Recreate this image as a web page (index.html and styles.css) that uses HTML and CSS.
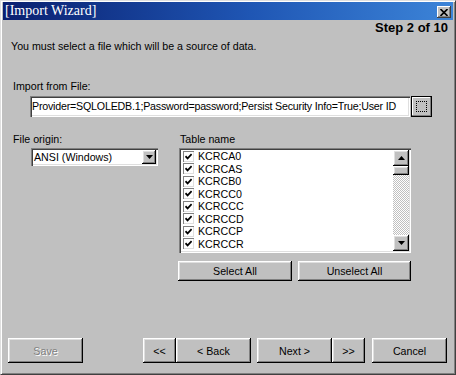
FILE: index.html
```html
<html>
    <head>
        <link rel="stylesheet" href="styles.css">
    </head>
    <body>

    <div class="window">
        <div class="titlebar">
            <span class="title">[Import Wizard]</span>
            <span class="close">
                <svg width="8" height="7" viewBox="0 0 8 7"><path d="M0.5 0 L7.5 7 M7.5 0 L0.5 7" stroke="#000" stroke-width="1.6"/></svg>
            </span>
        </div>

        <div class="step">Step 2 of 10</div>
        <div class="intro">You must select a file which will be a source of data.</div>

        <div class="label import-label">Import from File:</div>
        <div class="file-row">
            <div class="field file-input">Provider=SQLOLEDB.1;Password=password;Persist Security Info=True;User ID</div>
            <div class="browse"><span class="focus-box"></span></div>
        </div>

        <div class="columns">
            <div class="col-origin">
                <div class="label">File origin:</div>
                <div class="field combo">
                    <span class="combo-text">ANSI (Windows)</span>
                    <span class="raised arrow-btn">
                        <svg width="7" height="4" viewBox="0 0 7 4"><path d="M0 0 H7 L3.5 4 Z" fill="#000"/></svg>
                    </span>
                </div>
            </div>
            <div class="col-tables">
                <div class="label table-label">Table name</div>
                <div class="field listbox">
                    <div class="items">
                        <div class="item"><span class="check"><svg width="7" height="7" viewBox="0 0 7 7"><path d="M0.5 3.2 L2.6 5.4 L6.6 1.2" stroke="#000" stroke-width="1.7" fill="none"/></svg></span>KCRCA0</div>
                        <div class="item"><span class="check"><svg width="7" height="7" viewBox="0 0 7 7"><path d="M0.5 3.2 L2.6 5.4 L6.6 1.2" stroke="#000" stroke-width="1.7" fill="none"/></svg></span>KCRCAS</div>
                        <div class="item"><span class="check"><svg width="7" height="7" viewBox="0 0 7 7"><path d="M0.5 3.2 L2.6 5.4 L6.6 1.2" stroke="#000" stroke-width="1.7" fill="none"/></svg></span>KCRCB0</div>
                        <div class="item"><span class="check"><svg width="7" height="7" viewBox="0 0 7 7"><path d="M0.5 3.2 L2.6 5.4 L6.6 1.2" stroke="#000" stroke-width="1.7" fill="none"/></svg></span>KCRCC0</div>
                        <div class="item"><span class="check"><svg width="7" height="7" viewBox="0 0 7 7"><path d="M0.5 3.2 L2.6 5.4 L6.6 1.2" stroke="#000" stroke-width="1.7" fill="none"/></svg></span>KCRCCC</div>
                        <div class="item"><span class="check"><svg width="7" height="7" viewBox="0 0 7 7"><path d="M0.5 3.2 L2.6 5.4 L6.6 1.2" stroke="#000" stroke-width="1.7" fill="none"/></svg></span>KCRCCD</div>
                        <div class="item"><span class="check"><svg width="7" height="7" viewBox="0 0 7 7"><path d="M0.5 3.2 L2.6 5.4 L6.6 1.2" stroke="#000" stroke-width="1.7" fill="none"/></svg></span>KCRCCP</div>
                        <div class="item"><span class="check"><svg width="7" height="7" viewBox="0 0 7 7"><path d="M0.5 3.2 L2.6 5.4 L6.6 1.2" stroke="#000" stroke-width="1.7" fill="none"/></svg></span>KCRCCR</div>
                    </div>
                    <div class="scrollbar">
                        <span class="raised scroll-btn"><svg width="7" height="4" viewBox="0 0 7 4"><path d="M0 4 H7 L3.5 0 Z" fill="#000"/></svg></span>
                        <span class="raised thumb"></span>
                        <span class="track"></span>
                        <span class="raised scroll-btn"><svg width="7" height="4" viewBox="0 0 7 4"><path d="M0 0 H7 L3.5 4 Z" fill="#000"/></svg></span>
                    </div>
                </div>
                <div class="list-buttons">
                    <div class="raised btn select-all">Select All</div>
                    <div class="raised btn unselect-all">Unselect All</div>
                </div>
            </div>
        </div>

        <div class="nav">
            <div class="raised btn wide disabled">Save</div>
            <div class="raised btn narrow first">&lt;&lt;</div>
            <div class="raised btn wide">&lt; Back</div>
            <div class="raised btn wide next">Next &gt;</div>
            <div class="raised btn narrow">&gt;&gt;</div>
            <div class="raised btn wide cancel">Cancel</div>
        </div>
    </div>

    </body>
</html>
```

FILE: styles.css
```css
* {
    box-sizing: border-box;
}

body {
    margin: 0;
    background-color: #c0c0c0;
    font-family: "Liberation Sans", Arial, sans-serif;
    font-size: 8pt;
    color: #000;
    overflow: hidden;
}

.window {
    width: 456px;
    height: 375px;
    display: flex;
    flex-direction: column;
    padding: 1px 2px;
    border: 1px solid;
    border-color: #dfdfdf #404040 #404040 #dfdfdf;
    box-shadow: inset 1px 1px #fff, inset -1px -1px #808080;
    background-color: #c0c0c0;
}

.titlebar {
    height: 18px;
    display: flex;
    align-items: center;
    background: linear-gradient(90deg, #0a2070, #1f56b4 55%, #3c84d8);
    color: #fff;
}
.title {
    flex: 1;
    padding-left: 2px;
    font-family: "Liberation Serif", serif;
    font-size: 14px;
    line-height: 18px;
}
.close {
    width: 14px;
    height: 12px;
    margin: 2px 2px 0 0;
    display: flex;
    align-items: center;
    justify-content: center;
    background-color: #c0c0c0;
    box-shadow: inset -1px -1px #404040, inset 1px 1px #fff, inset -2px -2px #808080;
}

/* 3d bits */
.raised {
    background-color: #c0c0c0;
    box-shadow: inset -1px -1px #000, inset 1px 1px #fff, inset -2px -2px #808080, inset 2px 2px #dfdfdf;
}
.field {
    background-color: #fff;
    box-shadow: inset 1px 1px #808080, inset 2px 2px #404040, inset -1px -1px #fff, inset -2px -2px #dfdfdf;
}

.step {
    margin-top: 1px;
    padding-right: 5px;
    text-align: right;
    font-weight: bold;
    font-size: 13px;
    line-height: 14px;
}
.intro {
    margin: 4px 0 0 8px;
    line-height: 14px;
}

.label {
    line-height: 14px;
}
.import-label {
    margin: 26px 0 0 10px;
}

.file-row {
    display: flex;
    margin: 3px 0 0 27px;
    height: 21px;
}
.file-input {
    width: 380px;
    padding: 3px 0 0 2px;
    line-height: 15px;
    letter-spacing: -0.2px;
    white-space: nowrap;
    overflow: hidden;
}
.browse {
    width: 21px;
    margin-left: 1px;
    padding: 4px;
    border: 1px solid #000;
    background-color: #c0c0c0;
    box-shadow: inset -1px -1px #808080, inset 1px 1px #fff;
}
.focus-box {
    display: block;
    width: 100%;
    height: 100%;
    border: 1px dotted #000;
}

.columns {
    display: flex;
    margin-top: 15px;
}
.col-origin {
    width: 166px;
    margin-left: 10px;
}
.combo {
    display: flex;
    align-items: center;
    width: 127px;
    height: 18px;
    margin: 2px 0 0 18px;
    padding: 2px;
}
.combo-text {
    flex: 1;
    padding-left: 1px;
}
.arrow-btn {
    width: 14px;
    height: 14px;
    display: flex;
    align-items: center;
    justify-content: center;
}

.col-tables {
    width: 232px;
}
.table-label {
    padding-left: 1px;
}
.listbox {
    display: flex;
    height: 105px;
    margin-top: 2px;
    padding: 2px;
}
.items {
    flex: 1;
    padding-left: 2px;
    overflow: hidden;
}
.item {
    display: flex;
    align-items: center;
    height: 12.5px;
    white-space: nowrap;
}
.check {
    width: 11px;
    height: 11px;
    margin-right: 4px;
    display: flex;
    align-items: center;
    justify-content: center;
    background-color: #fff;
    box-shadow: inset 1px 1px #808080, inset -1px -1px #dfdfdf;
}
.scrollbar {
    width: 16px;
    display: flex;
    flex-direction: column;
}
.scroll-btn {
    height: 16px;
    display: flex;
    align-items: center;
    justify-content: center;
}
.thumb {
    height: 9px;
}
.track {
    flex: 1;
    background-color: #c0c0c0;
    background-image: repeating-conic-gradient(#fff 0 25%, #c0c0c0 0 50%);
    background-size: 2px 2px;
}

.list-buttons {
    display: flex;
    gap: 6px;
    margin: 8px 0 0 -1px;
}

.btn {
    height: 20px;
    display: flex;
    align-items: center;
    justify-content: center;
}
.select-all {
    width: 114px;
}
.unselect-all {
    width: 113px;
}

.nav {
    display: flex;
    margin: auto 6px 10px 5px;
}
.nav .btn {
    height: 25px;
}
.wide {
    width: 75px;
}
.narrow {
    width: 33px;
}
.first {
    margin-left: auto;
}
.next {
    margin-left: 6px;
}
.cancel {
    margin-left: 7px;
}
.disabled {
    color: #808080;
    text-shadow: 1px 1px #fff;
}
```
